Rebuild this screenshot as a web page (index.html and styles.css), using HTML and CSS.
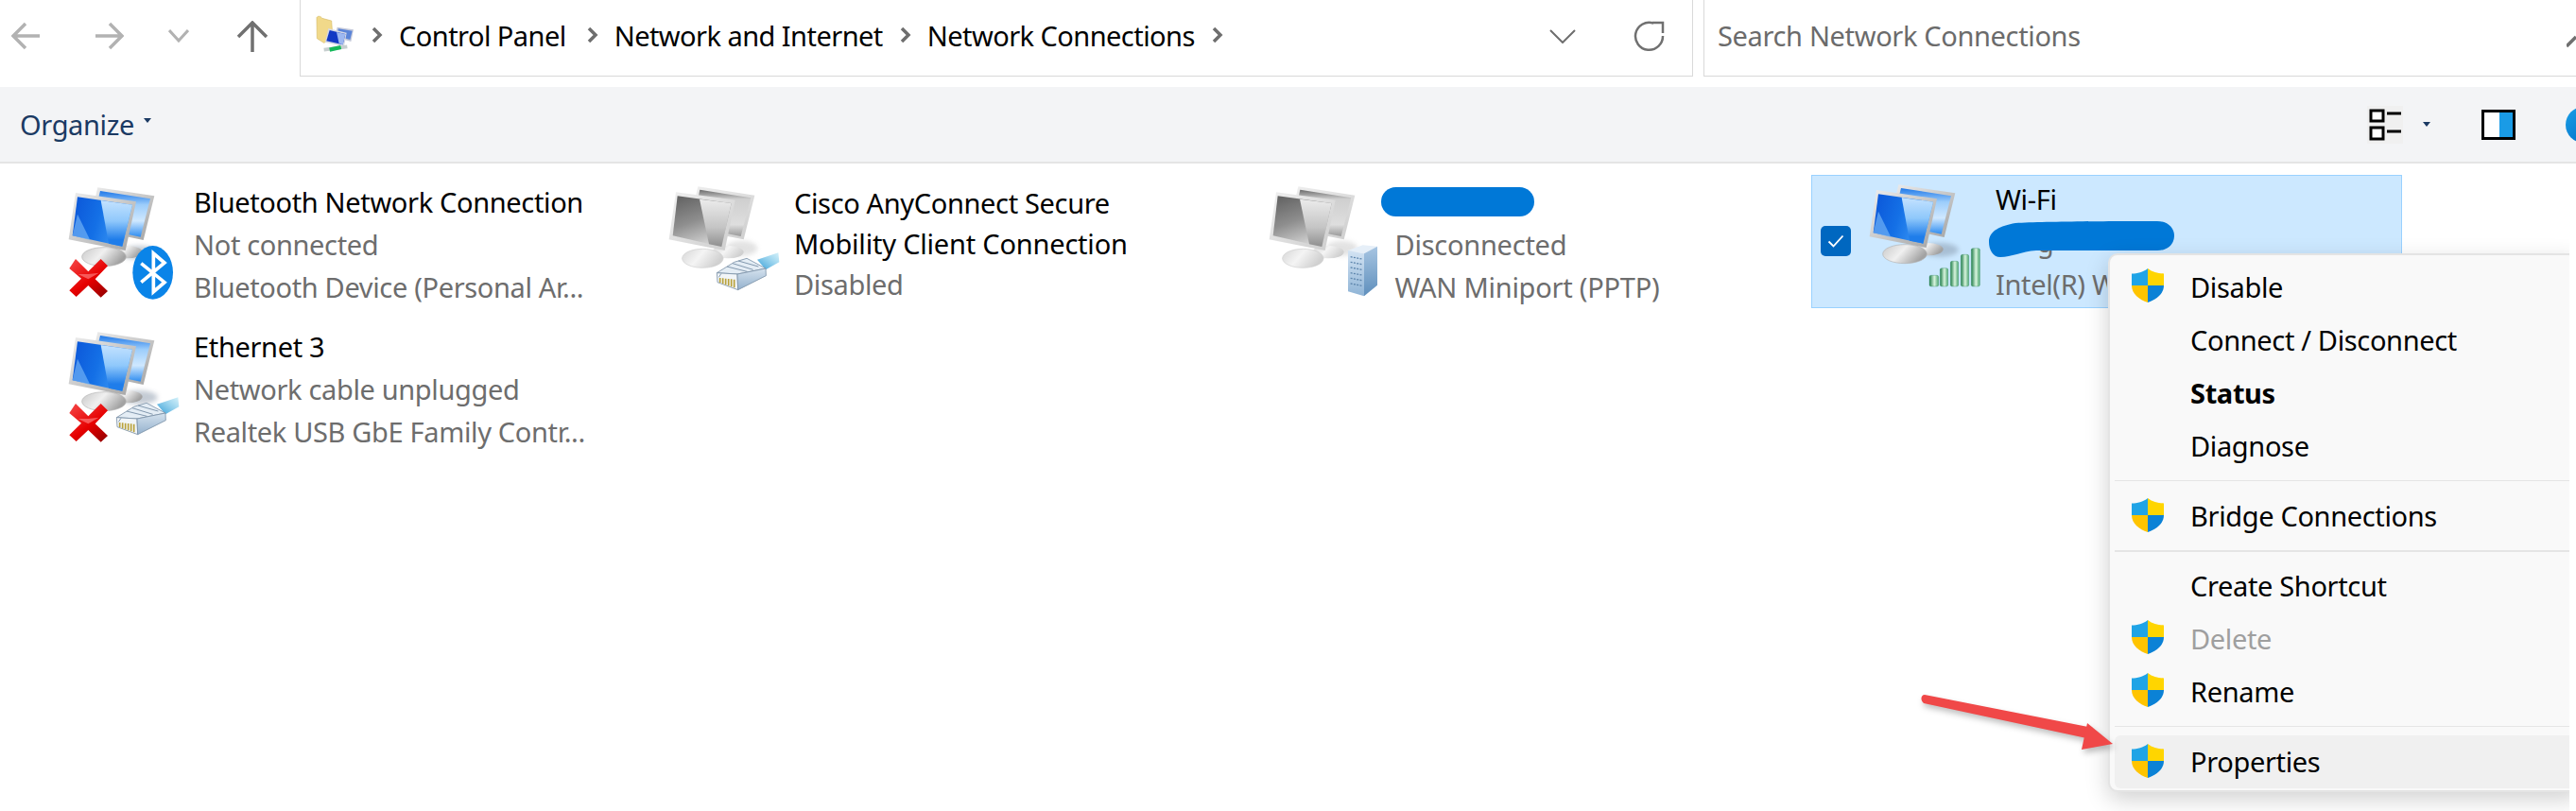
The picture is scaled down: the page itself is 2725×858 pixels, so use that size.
FILE: index.html
```html
<!DOCTYPE html>
<html lang="en">
<head>
<meta charset="utf-8">
<title>Network Connections</title>
<link rel="stylesheet" href="styles.css">
</head>
<body>
<svg class="defs" width="0" height="0" aria-hidden="true">
  <defs>
    <linearGradient id="frame" x1="0" y1="0" x2="1" y2="1"><stop offset="0" stop-color="#eeeeee"/><stop offset="1" stop-color="#a4a4a4"/></linearGradient>
    <linearGradient id="frameLight" x1="0" y1="0" x2="1" y2="1"><stop offset="0" stop-color="#f0f0f0"/><stop offset="1" stop-color="#cdcdcd"/></linearGradient>
    <linearGradient id="blueScreen" x1="0" y1="0" x2="1" y2="0.25"><stop offset="0" stop-color="#0b55d8"/><stop offset="0.5" stop-color="#1470e6"/><stop offset="1" stop-color="#3f9cf6"/></linearGradient>
    <linearGradient id="blueGlare" x1="0" y1="0" x2="0" y2="1"><stop offset="0" stop-color="#c4e2ff"/><stop offset="0.45" stop-color="#8fc8fb"/><stop offset="0.85" stop-color="#1f7dea"/></linearGradient>
    <linearGradient id="blueBack" x1="0" y1="0" x2="0" y2="1"><stop offset="0" stop-color="#1f78e8"/><stop offset="0.3" stop-color="#9ccdfb"/><stop offset="0.65" stop-color="#cfe8ff"/><stop offset="1" stop-color="#2f8df0"/></linearGradient>
    <linearGradient id="grayScreen" x1="0" y1="0" x2="0.4" y2="1"><stop offset="0" stop-color="#5f5f5f"/><stop offset="0.55" stop-color="#8e8e8e"/><stop offset="1" stop-color="#cfcfcf"/></linearGradient>
    <linearGradient id="grayGlare" x1="0" y1="0" x2="0" y2="1"><stop offset="0" stop-color="#ececec"/><stop offset="0.6" stop-color="#c4c4c4"/><stop offset="1" stop-color="#8f8f8f"/></linearGradient>
    <linearGradient id="grayBack" x1="0" y1="0" x2="0" y2="1"><stop offset="0" stop-color="#6a6a6a"/><stop offset="0.2" stop-color="#cfcfcf"/><stop offset="0.75" stop-color="#dedede"/><stop offset="1" stop-color="#9a9a9a"/></linearGradient>
    <linearGradient id="base" x1="0" y1="0" x2="1" y2="0.4"><stop offset="0" stop-color="#c8c8c8"/><stop offset="0.5" stop-color="#f0f0f0"/><stop offset="1" stop-color="#a2a2a2"/></linearGradient>
    <linearGradient id="baseLight" x1="0" y1="0" x2="1" y2="0.4"><stop offset="0" stop-color="#d6d6d6"/><stop offset="0.5" stop-color="#f4f4f4"/><stop offset="1" stop-color="#d0d0d0"/></linearGradient>
    <linearGradient id="xRed" gradientUnits="userSpaceOnUse" x1="60" y1="262" x2="140" y2="372"><stop offset="0" stop-color="#f23a3a"/><stop offset="0.55" stop-color="#e60000"/><stop offset="1" stop-color="#9e0000"/></linearGradient>
    <linearGradient id="bar" x1="0" y1="0" x2="1" y2="0"><stop offset="0" stop-color="#1f7d48"/><stop offset="0.55" stop-color="#d9f5df"/><stop offset="1" stop-color="#4ba56f"/></linearGradient>
    <linearGradient id="cable" x1="0" y1="1" x2="1" y2="0"><stop offset="0" stop-color="#2f9bd6"/><stop offset="1" stop-color="#b4e6f6" stop-opacity="0.6"/></linearGradient>
    <linearGradient id="plugSide" x1="0" y1="0" x2="0" y2="1"><stop offset="0" stop-color="#d5e2ee"/><stop offset="1" stop-color="#94b1cd"/></linearGradient>
    <linearGradient id="serverFace" x1="0" y1="0" x2="0" y2="1"><stop offset="0" stop-color="#d3e3f3"/><stop offset="1" stop-color="#8fb4d6"/></linearGradient>
    <linearGradient id="serverSide" x1="0" y1="0" x2="0" y2="1"><stop offset="0" stop-color="#a7c5e2"/><stop offset="1" stop-color="#5f8fbc"/></linearGradient>
    <filter id="soft" x="-40%" y="-40%" width="180%" height="180%"><feGaussianBlur stdDeviation="8"/></filter>
    <clipPath id="shieldClip"><path d="M17 0C22 4 28 5.500 34 5.500V18C34 27 26 33 17 36C8 33 0 27 0 18V5.500C6 5.500 12 4 17 0Z"/></clipPath>

    <symbol id="pair-blue" viewBox="0 0 420 420">
      <ellipse cx="262" cy="232" rx="58" ry="22" fill="#7d8da0" opacity=".45" filter="url(#soft)"/>
      <ellipse cx="222" cy="230" rx="50" ry="20" fill="url(#base)"/>
      <polygon points="130,25 310,52 275,192 100,155" fill="url(#frame)"/>
      <polygon points="138,36 297,61 266,182 110,150" fill="url(#blueBack)"/>
      <ellipse cx="150" cy="245" rx="70" ry="30" fill="url(#base)" stroke="#b4b4b4" stroke-width="2"/>
      <polygon points="60,42 252,70 218,225 38,190" fill="url(#frame)"/>
      <polygon points="66,55 240,80 208,212 50,178" fill="url(#blueScreen)"/>
      <polygon points="140,66 240,80 208,212 165,203" fill="url(#blueGlare)"/>
      <polygon points="66,110 106,192 50,178" fill="#6fb0f5" opacity=".7"/>
    </symbol>

    <symbol id="pair-gray" viewBox="0 0 420 420">
      <ellipse cx="268" cy="218" rx="50" ry="24" fill="#b8b8b8" opacity=".4" filter="url(#soft)"/>
      <ellipse cx="225" cy="230" rx="50" ry="20" fill="url(#baseLight)"/>
      <polygon points="130,22 310,50 275,190 100,155" fill="url(#frameLight)"/>
      <polygon points="136,32 298,58 266,180 110,150" fill="url(#grayBack)"/>
      <ellipse cx="145" cy="250" rx="65" ry="30" fill="url(#baseLight)" stroke="#cfcfcf" stroke-width="2"/>
      <polygon points="60,40 248,65 215,225 38,190" fill="url(#frameLight)"/>
      <polygon points="65,52 236,75 205,213 50,178" fill="url(#grayScreen)"/>
      <polygon points="135,62 236,75 205,213 165,205" fill="url(#grayGlare)"/>
    </symbol>

    <symbol id="x-mark" viewBox="0 0 420 420">
      <path d="M40 282L60 252L100 292L140 252L162 274L122 316L162 354L140 374L100 336L62 372L40 352L78 314Z" fill="url(#xRed)"/>
      <path d="M68 300L100 316L134 296L100 300Z" fill="#ff8a8a" opacity=".6"/>
    </symbol>

    <symbol id="bt-badge" viewBox="0 0 420 420">
      <ellipse cx="305" cy="295" rx="64" ry="85" fill="#0a84e8"/>
      <path d="M268 266L342 326L307 356V234L342 264L268 326" fill="none" stroke="#ffffff" stroke-width="11"/>
    </symbol>

    <symbol id="plug" viewBox="0 0 420 420">
      <polygon points="318,254 385,232 388,262 345,286" fill="url(#cable)"/>
      <polygon points="190,296 245,262 285,250 345,282 255,300" fill="#e4edf5" stroke="#7d93a8" stroke-width="2.500"/>
      <polygon points="190,296 255,300 257,350 192,326" fill="#f1f5f8" stroke="#7d93a8" stroke-width="2.500"/>
      <polygon points="255,300 345,282 346,305 257,350" fill="url(#plugSide)" stroke="#7d93a8" stroke-width="2.500"/>
      <path d="M200 312V327M209 313V331M218 314V334M227 315V337M236 316V340M245 317V343" stroke="#b9a23a" stroke-width="5"/>
      <path d="M222 276L286 292M240 266L305 286M258 258L322 276" stroke="#8298ae" stroke-width="3"/>
      <path d="M204 298L196 310" stroke="#8298ae" stroke-width="3"/>
    </symbol>

    <symbol id="server" viewBox="0 0 420 420">
      <polygon points="288,225 335,208 381,212 339,235" fill="#e6eff8"/>
      <polygon points="288,225 339,235 339,370 288,355" fill="url(#serverFace)"/>
      <polygon points="339,235 381,212 381,335 339,370" fill="url(#serverSide)"/>
      <path d="M296 245L332 252M296 262L332 269M296 279L332 286M296 296L332 303M296 313L332 320M296 330L332 337" stroke="#5e86ad" stroke-width="4" stroke-dasharray="6 4"/>
    </symbol>

    <symbol id="bars" viewBox="0 0 420 420">
      <rect x="228" y="313" width="29" height="35" rx="5" fill="url(#bar)" stroke="#2f8256"/>
      <rect x="262" y="290" width="25" height="58" rx="5" fill="url(#bar)" stroke="#2f8256"/>
      <rect x="295" y="268" width="25" height="80" rx="5" fill="url(#bar)" stroke="#2f8256"/>
      <rect x="328" y="247" width="25" height="101" rx="5" fill="url(#bar)" stroke="#2f8256"/>
      <rect x="361" y="227" width="27" height="121" rx="5" fill="url(#bar)" stroke="#2f8256"/>
    </symbol>

    <symbol id="shield" viewBox="0 0 34 36">
      <g clip-path="url(#shieldClip)">
        <rect width="17" height="18" fill="#20a4e6"/>
        <rect x="17" width="17" height="18" fill="#ffd500"/>
        <rect y="18" width="17" height="18" fill="#ffc400"/>
        <rect x="17" y="18" width="17" height="18" fill="#0b82d6"/>
      </g>
    </symbol>
  </defs>
</svg>

<header class="topbar">
  <nav class="nav">
    <svg class="nav-back" width="32" height="30" viewBox="0 0 32 30"><path d="M30 15H3M15 2L2 15L15 28" fill="none" stroke="#b2b2b2" stroke-width="3.500"/></svg>
    <svg class="nav-fwd" width="32" height="30" viewBox="0 0 32 30"><path d="M2 15H29M17 2L30 15L17 28" fill="none" stroke="#b2b2b2" stroke-width="3.500"/></svg>
    <svg class="nav-down" width="22" height="14" viewBox="0 0 22 14"><path d="M1 1L11 12L21 1" fill="none" stroke="#b2b2b2" stroke-width="3"/></svg>
    <svg class="nav-up" width="34" height="34" viewBox="0 0 34 34"><path d="M17 33V3M2 17L17 2L32 17" fill="none" stroke="#707070" stroke-width="3.500"/></svg>
  </nav>
  <div class="address">
    <svg class="addr-icon" width="45" height="50" viewBox="0 0 135 150">
      <path d="M15 20C18 14 28 14 32 22L62 30L66 86L38 100L16 86Z" fill="#f1d98a" stroke="#d8bd6a" stroke-width="2"/>
      <polygon points="80,50 132,58 124,96 72,82" fill="#c3c8da"/>
      <polygon points="84,55 128,62 121,90 78,78" fill="#5a84d8"/>
      <polygon points="52,54 110,68 102,112 42,98" fill="#d4d8e4"/>
      <polygon points="56,60 106,72 98,106 46,94" fill="#1239c4"/>
      <polygon points="78,66 106,72 98,106 86,102" fill="#9db8f0"/>
      <path d="M38 122L112 112" stroke="#c7cfcf" stroke-width="11"/>
      <path d="M56 122L92 114" stroke="#14b85a" stroke-width="13"/>
    </svg>
    <svg class="crumb-sep" width="12" height="16" viewBox="0 0 12 16"><path d="M2 1L9 8L2 15" fill="none" stroke="#6e6e6e" stroke-width="3.500"/></svg>
    <span class="crumb crumb-first">Control Panel</span>
    <svg class="crumb-sep" width="12" height="16" viewBox="0 0 12 16"><path d="M2 1L9 8L2 15" fill="none" stroke="#6e6e6e" stroke-width="3.500"/></svg>
    <span class="crumb">Network and Internet</span>
    <svg class="crumb-sep" width="12" height="16" viewBox="0 0 12 16"><path d="M2 1L9 8L2 15" fill="none" stroke="#6e6e6e" stroke-width="3.500"/></svg>
    <span class="crumb">Network Connections</span>
    <svg class="crumb-sep" width="12" height="16" viewBox="0 0 12 16"><path d="M2 1L9 8L2 15" fill="none" stroke="#6e6e6e" stroke-width="3.500"/></svg>
    <svg class="addr-drop" width="28" height="15" viewBox="0 0 28 15"><path d="M1 1L14 14L27 1" fill="none" stroke="#6e6e6e" stroke-width="2"/></svg>
    <svg class="addr-refresh" width="34" height="34" viewBox="0 0 34 34"><path d="M21 3.500A14.500 14.500 0 1 0 31 17" fill="none" stroke="#707070" stroke-width="2.500"/><path d="M20 3H31V14" fill="none" stroke="#707070" stroke-width="2.500"/></svg>
  </div>
  <div class="search">
    <span class="search-text">Search Network Connections</span>
    <svg class="search-icon" width="10" height="30" viewBox="0 0 10 30"><path d="M0 26L10 16" stroke="#707070" stroke-width="3.500"/></svg>
  </div>
</header>

<div class="toolbar">
  <span class="organize">Organize</span>
  <span class="caret caret-org"></span>
  <span class="spacer"></span>
  <span class="view-btn">
    <svg width="34" height="34" viewBox="0 0 34 34"><path d="M2 2H15V13H2ZM2 20H15V32H2Z" fill="#fff" stroke="#000" stroke-width="3"/><path d="M19 5H34M19 24H34" stroke="#000" stroke-width="3"/></svg>
  </span>
  <span class="caret caret-view"></span>
  <svg class="pane-btn" width="36" height="32" viewBox="0 0 36 32"><rect x="1.500" y="1.500" width="33" height="29" fill="#fff"/><rect x="19" y="1.500" width="15.500" height="29" fill="#1a9be6"/><rect x="1.500" y="1.500" width="33" height="29" fill="none" stroke="#000" stroke-width="3"/></svg>
  <span class="help-dot"></span>
</div>

<main class="grid">
  <section class="item">
    <svg class="icon" width="140" height="140" viewBox="0 0 420 420"><use href="#pair-blue"/><use href="#x-mark"/><use href="#bt-badge"/></svg>
    <div class="text">
      <div class="name">Bluetooth Network Connection</div>
      <div class="sub">Not connected</div>
      <div class="sub">Bluetooth Device (Personal Ar...</div>
    </div>
  </section>

  <section class="item">
    <svg class="icon" width="140" height="140" viewBox="0 0 420 420"><use href="#pair-gray"/><use href="#plug"/></svg>
    <div class="text text-wrapped">
      <div class="name name-wrap">Cisco AnyConnect Secure</div>
      <div class="name name-wrap name-long">Mobility Client Connection</div>
      <div class="sub">Disabled</div>
    </div>
  </section>

  <section class="item item-third">
    <svg class="icon" width="140" height="140" viewBox="0 0 420 420"><use href="#pair-gray"/><use href="#server"/></svg>
    <div class="text">
      <div class="name name-hidden">l</div>
      <div class="sub">Disconnected</div>
      <div class="sub">WAN Miniport (PPTP)</div>
      <svg class="blob blob-vpn" width="162" height="32" viewBox="0 0 162 32"><rect width="162" height="31" rx="15.500" fill="#0078d7"/></svg>
    </div>
  </section>

  <section class="item item-selected">
    <span class="check"><svg width="18" height="14" viewBox="0 0 18 14"><path d="M1.500 7.500L6.500 12.500L16.500 1.500" fill="none" stroke="#fff" stroke-width="1.800"/></svg></span>
    <svg class="icon" width="140" height="140" viewBox="0 0 420 420"><use href="#pair-blue"/><use href="#bars"/></svg>
    <div class="text">
      <div class="name">Wi-Fi</div>
      <div class="sub sub-hidden">g</div>
      <div class="sub sub-cut">Intel(R) W</div>
      <svg class="blob blob-wifi" width="196" height="39" viewBox="0 0 196 39"><path d="M0 22C0 10 12 5 28 2C60 0 150 0 178 0C190 0 196 8 196 15C196 24 190 31 178 31H50C34 32 24 38 12 38C4 38 0 30 0 22Z" fill="#0078d7"/></svg>
    </div>
  </section>

  <section class="item">
    <svg class="icon" width="140" height="140" viewBox="0 0 420 420"><use href="#pair-blue"/><use href="#x-mark"/><use href="#plug"/></svg>
    <div class="text">
      <div class="name">Ethernet 3</div>
      <div class="sub">Network cable unplugged</div>
      <div class="sub">Realtek USB GbE Family Contr...</div>
    </div>
  </section>
</main>

<div class="menu-clip">
  <div class="menu">
    <div class="menu-row"><svg class="shield" width="34" height="36"><use href="#shield"/></svg><span>Disable</span></div>
    <div class="menu-row"><span>Connect / Disconnect</span></div>
    <div class="menu-row menu-bold"><span>Status</span></div>
    <div class="menu-row"><span>Diagnose</span></div>
    <div class="menu-sep"></div>
    <div class="menu-row"><svg class="shield" width="34" height="36"><use href="#shield"/></svg><span>Bridge Connections</span></div>
    <div class="menu-sep menu-sep-tight"></div>
    <div class="menu-row"><span>Create Shortcut</span></div>
    <div class="menu-row menu-disabled"><svg class="shield" width="34" height="36"><use href="#shield"/></svg><span>Delete</span></div>
    <div class="menu-row"><svg class="shield" width="34" height="36"><use href="#shield"/></svg><span>Rename</span></div>
    <div class="menu-sep"></div>
    <div class="menu-row menu-hot"><svg class="shield" width="34" height="36"><use href="#shield"/></svg><span>Properties</span></div>
  </div>
</div>

<svg class="arrow" width="210" height="70" viewBox="0 0 210 70">
  <path d="M4 3L182 38L180 50L3 12C-1 9 0 3 4 3Z" fill="#f04848"/>
  <polygon points="176,33 203,55 170,61" fill="#f04848"/>
</svg>
</body>
</html>
```

FILE: styles.css
```css
* { box-sizing: border-box; }
html, body { margin: 0; height: 100%; }
body {
  position: relative;
  width: 2725px;
  height: 858px;
  overflow: hidden;
  background: #fff;
  font-family: "Noto Sans", "Open Sans", sans-serif;
  font-size: 29px;
  color: #000;
}
.defs { position: absolute; }

.topbar { display: flex; height: 81px; margin-bottom: 11px; }
.nav { display: flex; align-items: flex-start; width: 317px; flex: none; padding-top: 22px; }
.nav-back { margin: 1px 0 0 12px; }
.nav-fwd { margin: 1px 0 0 55px; }
.nav-down { margin: 9px 0 0 47px; }
.nav-up { margin: 0 0 0 50px; }

.address {
  display: flex;
  align-items: center;
  width: 1474px;
  flex: none;
  border: 1px solid #d9d9d9;
  border-top: 0;
  padding: 0 28px 6px 12px;
}
.addr-icon { margin: 0 18px 0 0; }
.crumb { margin: 0 18px 0 17px; letter-spacing: -0.55px; white-space: nowrap; }
.crumb-first { margin-right: 22px; }
.crumb-sep { flex: none; }
.addr-drop { margin: 2px 0 0 auto; }
.addr-refresh { margin: 2px 0 0 61px; }

.search {
  display: flex;
  align-items: center;
  flex: 1;
  margin-left: 11px;
  padding: 0 0 5px 14px;
  border-left: 1px solid #d9d9d9;
  border-bottom: 1px solid #d9d9d9;
  color: #6b6b6b;
}
.search-text { letter-spacing: -0.35px; white-space: nowrap; }
.search-icon { margin-left: auto; margin-right: 0; }

.toolbar {
  display: flex;
  align-items: center;
  height: 81px;
  padding-left: 21px;
  background: #f3f4f6;
  border-bottom: 2px solid #e5e5e5;
  color: #1b3a63;
}
.organize { letter-spacing: -0.35px; }
.caret { width: 0; height: 0; border: 4px solid transparent; border-top: 5px solid #1b3a63; border-bottom: 0; }
.caret-org { margin: -8px 0 0 10px; }
.spacer { flex: 1; }
.view-btn { display: flex; align-items: center; justify-content: center; width: 38px; height: 40px; background: #f0f0f0; }
.caret-view { margin: 0 0 0 21px; }
.pane-btn { margin-left: 54px; }
.help-dot {
  width: 38px;
  height: 38px;
  margin: 0 -27px 0 53px;
  border-radius: 50%;
  background: linear-gradient(135deg, #1aa0e8, #0067c0);
  flex: none;
}

.grid {
  display: grid;
  grid-template-columns: repeat(4, 625px);
  grid-auto-rows: 141px;
  column-gap: 10px;
  row-gap: 12px;
  padding: 12px 0 0 11px;
}
.item { position: relative; display: flex; padding: 5px 0 0 49px; }
.icon { flex: none; }
.text { position: relative; min-width: 0; flex: 1; margin-left: 5px; }
.text-wrapped { padding-top: 2px; }
.name { height: 44px; margin-top: 2px; line-height: 44px; letter-spacing: -0.35px; white-space: nowrap; }
.name-wrap { height: 41px; line-height: 41px; }
.name-long { letter-spacing: -0.2px; }
.name-hidden { padding-left: 71px; }
.sub { line-height: 44.500px; padding-top: 0.500px; color: #6d6d6d; letter-spacing: -0.35px; white-space: nowrap; }
.sub-cut { max-width: 118px; overflow: hidden; }

.item-third .text { margin-left: 5.500px; letter-spacing: -0.25px; }
.item-third .sub { letter-spacing: -0.25px; }

.item-selected {
  padding: 1px 0 0 48px;
  background: #cce8ff;
  border: 1px solid #99d1ff;
}
.item-selected .text { margin-left: 6px; }
.check {
  position: absolute;
  left: 9px;
  top: 53px;
  display: flex;
  align-items: center;
  justify-content: center;
  width: 32px;
  height: 32px;
  border-radius: 5px;
  background: #0067c0;
}
.sub-hidden { padding-left: 44px; }

.blob { position: absolute; }
.blob-vpn { left: -15px; top: 8px; }
.blob-wifi { left: -7px; top: 47px; }

.menu-clip {
  position: absolute;
  left: 2180px;
  top: 238px;
  width: 538px;
  height: 620px;
  overflow: hidden;
  padding: 30px 0 0 50px;
}
.menu {
  width: 500px;
  height: 570px;
  padding: 5px 0 0 5px;
  background: #f9f9f9;
  border: 2px solid #e4e4e4;
  border-radius: 10px;
  box-shadow: 0 8px 24px rgba(0, 0, 0, 0.18);
}
.menu-row {
  position: relative;
  display: flex;
  align-items: center;
  height: 56px;
  padding-left: 80px;
  border-radius: 6px 0 0 6px;
  letter-spacing: -0.35px;
}
.menu-row .shield { position: absolute; left: 18px; top: 9px; }
.menu-bold { font-weight: 700; }
.menu-disabled { color: #9f9f9f; }
.menu-hot { background: #f0f0f0; }
.menu-sep { height: 1.500px; margin: 8.500px 0; background: #e5e5e5; }
.menu-sep-tight { margin-bottom: 7.500px; }

.arrow {
  position: absolute;
  left: 2032px;
  top: 732px;
  filter: drop-shadow(2px 4px 3px rgba(0, 0, 0, 0.25));
}
```
